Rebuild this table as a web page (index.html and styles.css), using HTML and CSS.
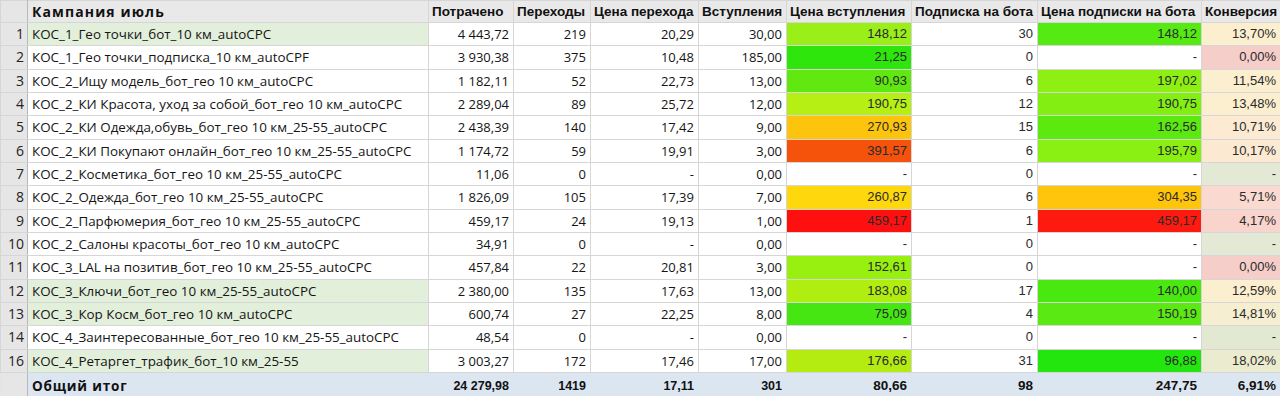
FILE: index.html
```html
<!DOCTYPE html>
<html lang="ru">
<head>
<meta charset="utf-8">
<title>Кампания июль</title>
<link rel="stylesheet" href="styles.css">
</head>
<body>
<table class="sheet">
  <colgroup>
    <col class="w-idx"><col class="w-name"><col class="w-spent"><col class="w-clicks"><col class="w-cpc"><col class="w-joins"><col class="w-cpj"><col class="w-subs"><col class="w-cps"><col class="w-conv">
  </colgroup>
  <thead>
    <tr class="head">
      <th class="idx"></th>
      <th class="title">Кампания июль</th>
      <th>Потрачено</th>
      <th>Переходы</th>
      <th>Цена перехода</th>
      <th class="sep">Вступления</th>
      <th>Цена вступления</th>
      <th>Подписка на бота</th>
      <th>Цена подписки на бота</th>
      <th>Конверсия</th>
    </tr>
  </thead>
  <tbody>
    <tr><td class="idx">1</td><td class="name hl">КОС_1_Гео точки_бот_10 км_autoCPC</td><td class="num">4 443,72</td><td class="num">219</td><td class="num">20,29</td><td class="num sep">30,00</td><td class="ar" style="background:#9aef18">148,12</td><td class="ar">30</td><td class="ar" style="background:#55ea12">148,12</td><td class="ar" style="background:#fbefd0">13,70%</td></tr>
    <tr><td class="idx">2</td><td class="name">КОС_1_Гео точки_подписка_10 км_autoCPF</td><td class="num">3 930,38</td><td class="num">375</td><td class="num">10,48</td><td class="num sep">185,00</td><td class="ar" style="background:#2ee60c">21,25</td><td class="ar">0</td><td class="ar dash">-</td><td class="ar" style="background:#f5cdc9">0,00%</td></tr>
    <tr><td class="idx">3</td><td class="name">КОС_2_Ищу модель_бот_гео 10 км_autoCPC</td><td class="num">1 182,11</td><td class="num">52</td><td class="num">22,73</td><td class="num sep">13,00</td><td class="ar" style="background:#60e810">90,93</td><td class="ar">6</td><td class="ar" style="background:#8ef012">197,02</td><td class="ar" style="background:#fcefd0">11,54%</td></tr>
    <tr><td class="idx">4</td><td class="name">КОС_2_КИ Красота, уход за собой_бот_гео 10 км_autoCPC</td><td class="num">2 289,04</td><td class="num">89</td><td class="num">25,72</td><td class="num sep">12,00</td><td class="ar" style="background:#b6ef14">190,75</td><td class="ar">12</td><td class="ar" style="background:#82ee12">190,75</td><td class="ar" style="background:#fbefcf">13,48%</td></tr>
    <tr><td class="idx">5</td><td class="name">КОС_2_КИ Одежда,обувь_бот_гео 10 км_25-55_autoCPC</td><td class="num">2 438,39</td><td class="num">140</td><td class="num">17,42</td><td class="num sep">9,00</td><td class="ar" style="background:#fcc40c">270,93</td><td class="ar">15</td><td class="ar" style="background:#5ce910">162,56</td><td class="ar" style="background:#fcead2">10,71%</td></tr>
    <tr><td class="idx">6</td><td class="name">КОС_2_КИ Покупают онлайн_бот_гео 10 км_25-55_autoCPC</td><td class="num">1 174,72</td><td class="num">59</td><td class="num">19,91</td><td class="num sep">3,00</td><td class="ar" style="background:#f5520c">391,57</td><td class="ar">6</td><td class="ar" style="background:#8aef12">195,79</td><td class="ar" style="background:#fce9d1">10,17%</td></tr>
    <tr><td class="idx">7</td><td class="name">КОС_2_Косметика_бот_гео 10 км_25-55_autoCPC</td><td class="num">11,06</td><td class="num">0</td><td class="num dash">-</td><td class="num sep">0,00</td><td class="ar dash">-</td><td class="ar">0</td><td class="ar dash">-</td><td class="ar dash" style="background:#e3e9d5">-</td></tr>
    <tr><td class="idx">8</td><td class="name">КОС_2_Одежда_бот_гео 10 км_25-55_autoCPC</td><td class="num">1 826,09</td><td class="num">105</td><td class="num">17,39</td><td class="num sep">7,00</td><td class="ar" style="background:#fed80c">260,87</td><td class="ar">6</td><td class="ar" style="background:#ffc40c">304,35</td><td class="ar" style="background:#fadad0">5,71%</td></tr>
    <tr><td class="idx">9</td><td class="name">КОС_2_Парфюмерия_бот_гео 10 км_25-55_autoCPC</td><td class="num">459,17</td><td class="num">24</td><td class="num">19,13</td><td class="num sep">1,00</td><td class="ar" style="background:#ff1010">459,17</td><td class="ar">1</td><td class="ar" style="background:#ff1a10">459,17</td><td class="ar" style="background:#f9d4cc">4,17%</td></tr>
    <tr><td class="idx">10</td><td class="name">КОС_2_Салоны красоты_бот_гео 10 км_autoCPC</td><td class="num">34,91</td><td class="num">0</td><td class="num dash">-</td><td class="num sep">0,00</td><td class="ar dash">-</td><td class="ar">0</td><td class="ar dash">-</td><td class="ar dash" style="background:#e3e9d5">-</td></tr>
    <tr><td class="idx">11</td><td class="name">КОС_3_LAL на позитив_бот_гео 10 км_25-55_autoCPC</td><td class="num">457,84</td><td class="num">22</td><td class="num">20,81</td><td class="num sep">3,00</td><td class="ar" style="background:#98f010">152,61</td><td class="ar">0</td><td class="ar dash">-</td><td class="ar" style="background:#f5cdc9">0,00%</td></tr>
    <tr><td class="idx">12</td><td class="name hl">КОС_3_Ключи_бот_гео 10 км_25-55_autoCPC</td><td class="num">2 380,00</td><td class="num">135</td><td class="num">17,63</td><td class="num sep">13,00</td><td class="ar" style="background:#b0ee12">183,08</td><td class="ar">17</td><td class="ar" style="background:#4ae811">140,00</td><td class="ar" style="background:#fbefd0">12,59%</td></tr>
    <tr><td class="idx">13</td><td class="name hl">КОС_3_Кор Косм_бот_гео 10 км_autoCPC</td><td class="num">600,74</td><td class="num">27</td><td class="num">22,25</td><td class="num sep">8,00</td><td class="ar" style="background:#46e612">75,09</td><td class="ar">4</td><td class="ar" style="background:#5ae912">150,19</td><td class="ar" style="background:#f5eed0">14,81%</td></tr>
    <tr><td class="idx">14</td><td class="name">КОС_4_Заинтересованные_бот_гео 10 км_25-55_autoCPC</td><td class="num">48,54</td><td class="num">0</td><td class="num dash">-</td><td class="num sep">0,00</td><td class="ar dash">-</td><td class="ar">0</td><td class="ar dash">-</td><td class="ar dash" style="background:#e3e8d3">-</td></tr>
    <tr><td class="idx">16</td><td class="name hl">КОС_4_Ретаргет_трафик_бот_10 км_25-55</td><td class="num">3 003,27</td><td class="num">172</td><td class="num">17,46</td><td class="num sep">17,00</td><td class="ar" style="background:#b4ec12">176,66</td><td class="ar">31</td><td class="ar" style="background:#24e60f">96,88</td><td class="ar" style="background:#ebebcf">18,02%</td></tr>
  </tbody>
  <tfoot>
    <tr class="total"><td class="idx"></td><td class="name">Общий итог</td><td class="num">24 279,98</td><td class="num">1419</td><td class="num">17,11</td><td class="num">301</td><td class="ar">80,66</td><td class="ar">98</td><td class="ar">247,75</td><td class="ar">6,91%</td></tr>
  </tfoot>
</table>
</body>
</html>
```

FILE: styles.css
```css
html, body {
  margin: 0;
  padding: 0;
  background: #ffffff;
  overflow: hidden;
}

.sheet {
  width: 1280px;
  border-collapse: collapse;
  table-layout: fixed;
  font-family: "Open Sans", "Liberation Sans", sans-serif;
  font-size: 13px;
  color: #151515;
}

.w-idx { width: 27px; }
.w-name { width: 401px; }
.w-spent { width: 85px; }
.w-clicks { width: 77px; }
.w-cpc { width: 108px; }
.w-joins { width: 88px; }
.w-cpj { width: 125px; }
.w-subs { width: 126px; }
.w-cps { width: 164px; }
.w-conv { width: 79px; }

.sheet th,
.sheet td {
  border: 1px solid #d6d6d6;
  padding: 0 4px;
  white-space: nowrap;
  overflow: hidden;
  line-height: 16px;
}

.head th {
  height: 21px;
  background: #e9e9e9;
  font-family: "Liberation Sans", Arial, sans-serif;
  font-weight: bold;
  font-size: 13.5px;
  text-align: left;
  color: #111;
  padding: 0 3px;
}

.head th.title {
  font-family: "Open Sans", sans-serif;
  font-size: 14px;
  letter-spacing: 1.1px;
  padding-left: 4px;
}

.sheet tbody tr {
  height: 23.33px;
}

.sheet td.idx,
.sheet th.idx {
  background: #e6e6e6;
  border-right: 1px solid #b8b8b8;
  text-align: right;
  padding: 0 3px 0 0;
  color: #222;
  font-size: 14px;
}

.name {
  text-align: left;
  padding-left: 4px;
  font-size: 13.4px;
}

.name.hl {
  background: #e2efda;
}

.num {
  text-align: right;
}

.sep {
  border-left: 1px solid #9a9a9a !important;
}

.ar {
  text-align: right;
  font-family: "Liberation Sans", Arial, sans-serif;
  color: #2a2a2a;
  padding-right: 3px;
}

.dash {
  padding-right: 6px;
}

.total td {
  height: 28px;
  background: #dce6f1;
  border-left-color: #dce6f1;
  border-right-color: #dce6f1;
  font-weight: bold;
  vertical-align: top;
  padding-top: 5px;
  color: #111;
}

.total td.num {
  font-family: "Liberation Sans", Arial, sans-serif;
  font-size: 12.5px;
}

.total td.name {
  font-family: "Open Sans", sans-serif;
  font-size: 13.5px;
  letter-spacing: 0.8px;
}

.total td.ar {
  color: #111;
  font-size: 13.5px;
}

.total td.idx {
  background: #e6e6e6;
  border-right-color: #b8b8b8;
}
```
